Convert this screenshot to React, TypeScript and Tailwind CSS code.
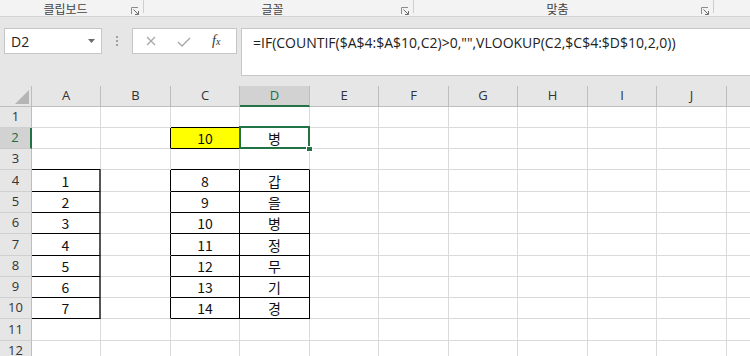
import React from "react";

const COLS = ["A", "B", "C", "D", "E", "F", "G", "H", "I", "J", "K"];
const ROWS = [1, 2, 3, 4, 5, 6, 7, 8, 9, 10, 11, 12];

const DATA: Record<string, string> = {
  C2: "10",
  D2: "병",
  A4: "1", A5: "2", A6: "3", A7: "4", A8: "5", A9: "6", A10: "7",
  C4: "8", C5: "9", C6: "10", C7: "11", C8: "12", C9: "13", C10: "14",
  D4: "갑", D5: "을", D6: "병", D7: "정", D8: "무", D9: "기", D10: "경",
};

const FONT = { fontFamily: "'Noto Sans CJK KR', 'Noto Sans', sans-serif" };

function Launcher() {
  return (
    <svg width="8" height="8" viewBox="0 0 8 8" className="mt-[7px]">
      <path d="M0.5 7 V0.5 H7" fill="none" stroke="#8c8c8c" strokeWidth="1" />
      <path d="M2.5 2.5 L7 7" fill="none" stroke="#6d6d6d" strokeWidth="1" />
      <path d="M7.5 4 V7.5 H4" fill="none" stroke="#6d6d6d" strokeWidth="1" />
    </svg>
  );
}

function Group({ width, label }: { width: string; label: string }) {
  return (
    <div className={`flex h-full ${width}`}>
      <div className="flex-1 flex justify-center items-start pt-[1px] text-[12px] leading-[15px] text-[#444]">
        {label}
      </div>
      <Launcher />
      <div className="ml-[4px] w-px h-[13px] bg-[#cfcfcf]" />
    </div>
  );
}

function cellClass(r: number, c: number) {
  const col = COLS[c];
  const inA = c === 0 && r >= 4 && r <= 10;
  const inCD = (c === 2 || c === 3) && r >= 4 && r <= 10;
  let right = "border-r border-r-[#dadada]";
  let bottom = "border-b border-b-[#dadada]";
  if (inA) right = "border-r-2 border-r-[#555555]";
  if ((c === 1 && r >= 4 && r <= 10) || inCD) right = "border-r border-r-black";
  if (col === "C" && r === 2) right = "border-r border-r-black";
  if (col === "B" && r === 2) right = "border-r border-r-black";
  if ((c === 0 || c === 2 || c === 3) && r >= 3 && r <= 10) bottom = "border-b border-b-black";
  if (col === "C" && (r === 1 || r === 2)) bottom = "border-b border-b-black";
  const bg = col === "C" && r === 2 ? "bg-[#ffff00]" : "bg-white";
  return `${right} ${bottom} ${bg} relative flex items-center justify-center text-[14px] text-[#111] leading-none`;
}

export default function App() {
  return (
    <div className="w-[750px] h-[356px] overflow-hidden bg-white" style={FONT}>
      {/* ribbon group labels */}
      <div className="flex h-[17px] bg-[#f3f3f3] border-b border-[#d4d4d4]">
        <Group width="w-[144px]" label="클립보드" />
        <Group width="w-[270px]" label="글꼴" />
        <Group width="w-[300px]" label="맞춤" />
        <div className="flex-1" />
      </div>

      {/* formula bar */}
      <div className="flex h-[69px] bg-[#e6e6e6] pt-[11px]">
        <div className="ml-[4px] w-[98px] h-[26px] bg-white border border-[#c6c6c6] flex items-center pl-[6px] text-[14px] text-[#222]">
          <span className="flex-1" style={{ fontFamily: "'Open Sans', sans-serif" }}>D2</span>
          <svg width="7" height="4" viewBox="0 0 7 4" className="mr-[6px]">
            <path d="M0 0 H7 L3.5 4 Z" fill="#6b6b6b" />
          </svg>
        </div>
        <div className="w-[30px] h-[26px] flex flex-col items-center justify-center gap-[2px]">
          <div className="w-[2px] h-[2px] bg-[#a0a0a0]" />
          <div className="w-[2px] h-[2px] bg-[#a0a0a0]" />
          <div className="w-[2px] h-[2px] bg-[#a0a0a0]" />
        </div>
        <div className="w-[105px] h-[26px] bg-white border border-[#c6c6c6] flex items-center">
          <svg width="10" height="10" viewBox="0 0 10 10" className="ml-[13px]">
            <path d="M1 1 L9 9 M9 1 L1 9" stroke="#a6a6a6" strokeWidth="1.2" />
          </svg>
          <svg width="14" height="10" viewBox="0 0 14 10" className="ml-[21px] mt-[2px]">
            <path d="M1 5 L5 9 L13 1" fill="none" stroke="#a6a6a6" strokeWidth="1.3" />
          </svg>
          <span
            className="ml-[21px] text-[14px] italic text-[#333] leading-none"
            style={{ fontFamily: "'Liberation Serif', serif" }}
          >
            f<span className="text-[10px]">x</span>
          </span>
        </div>
        <div
          className="ml-[4px] flex-1 h-[48px] bg-white border border-[#c6c6c6] border-r-0 pl-[11px] pt-[3px] text-[14px] text-[#222] whitespace-nowrap"
          style={{ fontFamily: "'Open Sans', sans-serif" }}
        >
          =IF(COUNTIF($A$4:$A$10,C2)&gt;0,"",VLOOKUP(C2,$C$4:$D$10,2,0))
        </div>
      </div>

      {/* sheet grid */}
      <div className="grid grid-cols-[32px_69px_70px_69px_70px_69px_70px_69px_70px_69px_70px_69px] grid-rows-[21px_21px_21px_21px_22px_21px_21px_22px_21px_21px_21px_22px_21px]">
        {/* header row */}
        <div className="relative bg-[#e6e6e6] border-r border-b border-[#bdbdbd]">
          <svg width="14" height="14" viewBox="0 0 14 14" className="absolute left-[15px] top-[4px]">
            <path d="M14 0 L14 14 L0 14 Z" fill="#b5b5b5" />
          </svg>
        </div>
        {COLS.map((c) =>
          c === "D" ? (
            <div
              key={c}
              className="bg-[#d2d2d2] border-r border-r-[#bdbdbd] border-b-2 border-b-[#217346] flex items-center justify-center text-[13px] text-[#1e6b41]"
              style={{ fontFamily: "'Open Sans', sans-serif" }}
            >
              {c}
            </div>
          ) : (
            <div
              key={c}
              className="bg-[#e6e6e6] border-r border-r-[#bdbdbd] border-b border-b-[#bdbdbd] flex items-center justify-center text-[13px] text-[#333]"
              style={{ fontFamily: "'Open Sans', sans-serif" }}
            >
              {c}
            </div>
          )
        )}

        {ROWS.map((r) => (
          <React.Fragment key={r}>
            {r === 2 ? (
              <div
                className="bg-[#d2d2d2] border-r-2 border-r-[#217346] border-b border-b-[#c8c8c8] flex items-center justify-center text-[13px] text-[#1e6b41]"
                style={{ fontFamily: "'Open Sans', sans-serif" }}
              >
                {r}
              </div>
            ) : (
              <div
                className="bg-[#e6e6e6] border-r border-r-[#bdbdbd] border-b border-b-[#d0d0d0] flex items-center justify-center text-[13px] text-[#333]"
                style={{ fontFamily: "'Open Sans', sans-serif" }}
              >
                {r}
              </div>
            )}
            {COLS.map((col, ci) => {
              const key = `${col}${r}`;
              return (
                <div key={key} className={cellClass(r, ci)}>
                  {DATA[key] ?? ""}
                  {key === "D2" && (
                    <>
                      <div className="absolute z-10 -left-[1px] -top-[2px] -right-[1px] -bottom-[1px] border-2 border-[#217346]" />
                      <div className="absolute z-20 -right-[4px] -bottom-[4px] w-[7px] h-[6px] bg-[#217346] border border-white" />
                    </>
                  )}
                </div>
              );
            })}
          </React.Fragment>
        ))}
      </div>
    </div>
  );
}
